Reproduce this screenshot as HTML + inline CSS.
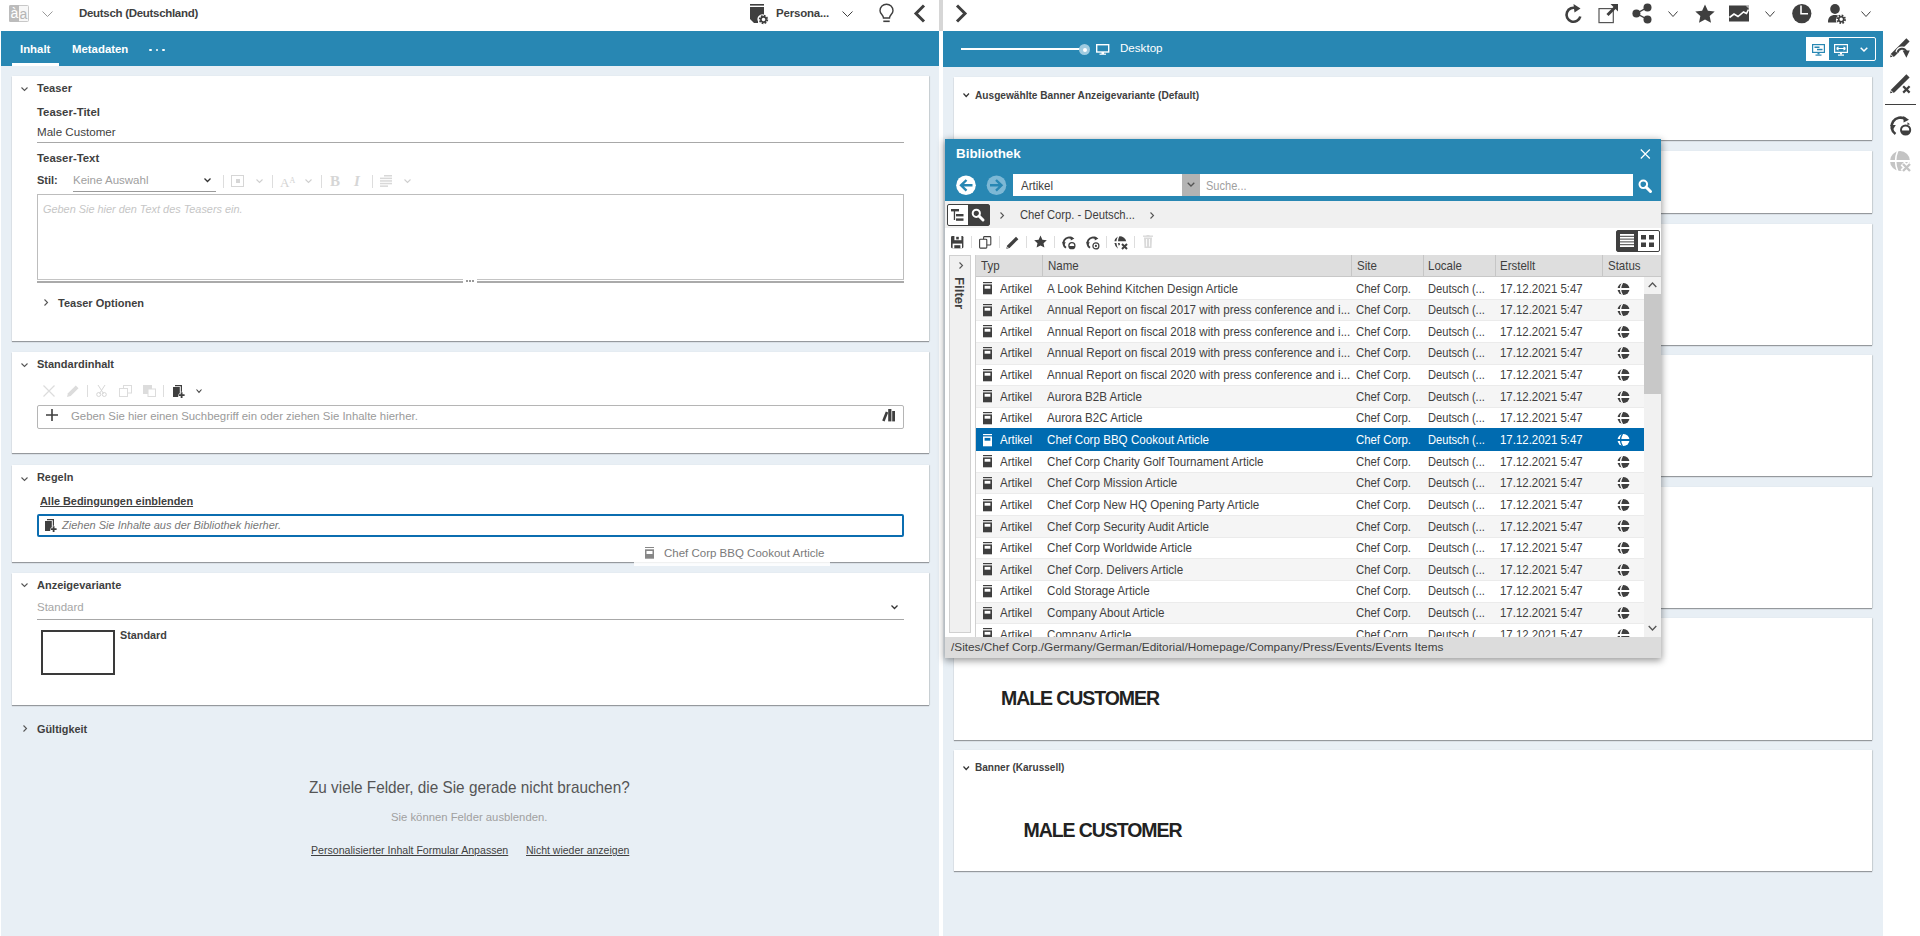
<!DOCTYPE html>
<html><head><meta charset="utf-8">
<style>
*{margin:0;padding:0;box-sizing:border-box}
html,body{width:1920px;height:936px;overflow:hidden;background:#fff;font-family:"Liberation Sans",sans-serif;color:#3f3f3f}
.a{position:absolute}
.t{position:absolute;white-space:nowrap;line-height:1}
.b{font-weight:bold}
svg{position:absolute;overflow:visible}
.card{position:absolute;background:#fff;box-shadow:0 1px 1px rgba(0,0,0,.35),1px 0 1px rgba(0,0,0,.08)}
.rcard{position:absolute;background:#fff;box-shadow:0 1px 1px rgba(0,0,0,.35),1px 0 1px rgba(0,0,0,.08);left:954px;width:918px}
.row{position:absolute;left:976px;width:668px;height:22px;font-size:11.6px;color:#3f3f3f}
.row .t{top:6px}
</style></head><body>

<!-- ============ LEFT PANEL ============ -->
<div class="a" style="left:0;top:0;width:939px;height:31px;background:#fff"></div>
<div class="a" style="left:939px;top:0;width:4px;height:31px;background:#d6d6d6"></div>
<div class="a" style="left:1px;top:31px;width:938px;height:35px;background:#2887b3"></div>
<div class="a" style="left:1px;top:66px;width:938px;height:870px;background:#e8eff5"></div>

<!-- top toolbar left -->
<div class="a" style="left:9px;top:5px;width:20px;height:17px;background:#f7f7f7;border:1px solid #c8c8c8;border-radius:1.5px"></div>
<div class="a" style="left:9px;top:5px;width:10px;height:17px;background:#bcbcbc;border-radius:1.5px 0 0 1.5px"></div>
<div class="t" style="left:10.5px;top:5.5px;font-size:14px;color:#fff">à</div>
<div class="t" style="left:19.5px;top:6.5px;font-size:14px;color:#b5b5b5">a</div>
<svg style="left:42px;top:11px" width="11" height="7"><path d="M0.5 0.5 L5.5 5.5 L10.5 0.5" fill="none" stroke="#9a9a9a" stroke-width="1"/></svg>
<div class="t b" style="left:79px;top:8.3px;font-size:11.5px;letter-spacing:-0.3px;color:#3f3f3f">Deutsch (Deutschland)</div>

<!-- personalization icon -->
<svg style="left:750px;top:4px" width="19" height="21" viewBox="0 0 19 21">
<rect x="0" y="0" width="14" height="1.6" fill="#3f3f3f"/>
<path d="M0 3 H14 V10.5 A5 5 0 0 0 8 17.5 V19 H4 L0 15 Z" fill="#3f3f3f"/>
<g transform="translate(13.5,15.5)"><circle r="3.6" fill="none" stroke="#3f3f3f" stroke-width="2.2" stroke-dasharray="1.6 1.2"/><circle r="2.6" fill="none" stroke="#3f3f3f" stroke-width="1.6"/></g>
</svg>
<div class="t b" style="left:776px;top:8px;font-size:11.5px;letter-spacing:-0.2px">Persona...</div>
<svg style="left:842px;top:11px" width="11" height="7"><path d="M0.5 0.5 L5.5 5.5 L10.5 0.5" fill="none" stroke="#3f3f3f" stroke-width="1"/></svg>
<!-- bulb -->
<svg style="left:879px;top:4px" width="15" height="19" viewBox="0 0 15 19">
<path d="M4.5 14 C4.5 11 1 10 1 6.7 A6.5 6.5 0 0 1 14 6.7 C14 10 10.5 11 10.5 14 Z" fill="none" stroke="#3f3f3f" stroke-width="1.4"/>
<rect x="4.3" y="16.5" width="6.4" height="1.6" fill="#3f3f3f"/>
</svg>
<svg style="left:913px;top:4px" width="13" height="19"><path d="M11 1.5 L3 9.5 L11 17.5" fill="none" stroke="#3f3f3f" stroke-width="3"/></svg>

<!-- tabs -->
<div class="t b" style="left:20px;top:44px;font-size:11.4px;color:#fff">Inhalt</div>
<div class="t b" style="left:72px;top:44px;font-size:11.4px;color:#fff">Metadaten</div>
<div class="a" style="left:149px;top:48.5px;width:2.6px;height:2.6px;border-radius:50%;background:#fff"></div>
<div class="a" style="left:155.5px;top:48.5px;width:2.6px;height:2.6px;border-radius:50%;background:#fff"></div>
<div class="a" style="left:162px;top:48.5px;width:2.6px;height:2.6px;border-radius:50%;background:#fff"></div>
<div class="a" style="left:12px;top:63px;width:47px;height:3px;background:#fff"></div>

<!-- card 1: Teaser -->
<div class="card" style="left:12px;top:76px;width:917px;height:265px"></div>
<svg style="left:21px;top:87px" width="7" height="5"><path d="M0.5 0.5 L3.5 3.5 L6.5 0.5" fill="none" stroke="#555" stroke-width="1.1"/></svg>
<div class="t b" style="left:37px;top:83px;font-size:11.1px">Teaser</div>
<div class="t b" style="left:37px;top:107px;font-size:11.4px">Teaser-Titel</div>
<div class="t" style="left:37px;top:126px;font-size:11.6px">Male Customer</div>
<div class="a" style="left:37px;top:142px;width:867px;height:1px;background:#a8a8a8"></div>
<div class="t b" style="left:37px;top:153px;font-size:11.4px">Teaser-Text</div>
<div class="t b" style="left:37px;top:175px;font-size:11px">Stil:</div>
<div class="t" style="left:73px;top:175px;font-size:11.5px;color:#a0a0a0">Keine Auswahl</div>
<svg style="left:204px;top:178px" width="7" height="5"><path d="M0.5 0.5 L3.5 3.5 L6.5 0.5" fill="none" stroke="#333" stroke-width="1.3"/></svg>
<div class="a" style="left:73px;top:191px;width:143px;height:1px;background:#9a9a9a"></div>
<!-- rte toolbar -->
<div class="a" style="left:223px;top:175px;width:1px;height:13px;background:#ddd"></div>
<div class="a" style="left:231px;top:175px;width:13px;height:12px;border:1px solid #d6d6d6"></div>
<div class="a" style="left:236px;top:179px;width:4px;height:4px;background:#d6d6d6"></div>
<svg style="left:256px;top:179px" width="7" height="5"><path d="M0.5 0.5 L3.5 3.5 L6.5 0.5" fill="none" stroke="#cfcfcf" stroke-width="1.1"/></svg>
<div class="a" style="left:272px;top:175px;width:1px;height:13px;background:#ddd"></div>
<div class="t" style="left:280px;top:176px;font-size:13px;color:#d3d3d3;font-family:'Liberation Serif',serif">A<span style="font-size:8px;vertical-align:4px">A</span></div>
<svg style="left:305px;top:179px" width="7" height="5"><path d="M0.5 0.5 L3.5 3.5 L6.5 0.5" fill="none" stroke="#cfcfcf" stroke-width="1.1"/></svg>
<div class="a" style="left:321px;top:175px;width:1px;height:13px;background:#ddd"></div>
<div class="t b" style="left:330px;top:174px;font-size:15px;color:#d6d6d6;font-family:'Liberation Serif',serif">B</div>
<div class="t b" style="left:354px;top:174px;font-size:15px;color:#d6d6d6;font-family:'Liberation Serif',serif;font-style:italic">I</div>
<div class="a" style="left:372px;top:175px;width:1px;height:13px;background:#ddd"></div>
<svg style="left:380px;top:175px" width="13" height="12"><g fill="#d8d8d8"><rect x="4" y="0" width="8" height="1.5"/><rect x="0" y="2.6" width="12" height="1.5"/><rect x="0" y="5.2" width="12" height="1.5"/><rect x="0" y="7.8" width="12" height="1.5"/><rect x="0" y="10.4" width="8" height="1.5"/></g></svg>
<svg style="left:404px;top:179px" width="7" height="5"><path d="M0.5 0.5 L3.5 3.5 L6.5 0.5" fill="none" stroke="#cfcfcf" stroke-width="1.1"/></svg>
<!-- editor box -->
<div class="a" style="left:37px;top:194px;width:867px;height:86px;border:1px solid #bdbdbd;border-bottom:none"></div>
<div class="a" style="left:37px;top:279px;width:867px;height:1px;background:#c4c4c4"></div>
<div class="a" style="left:37px;top:281px;width:867px;height:2px;background:#aaa"></div>
<div class="a" style="left:463px;top:278px;width:14px;height:5px;background:#fff"></div>
<div class="a" style="left:466px;top:280px;width:2px;height:2px;background:#999"></div>
<div class="a" style="left:469px;top:280px;width:2px;height:2px;background:#999"></div>
<div class="a" style="left:472px;top:280px;width:2px;height:2px;background:#999"></div>
<div class="t" style="left:43px;top:203.5px;font-size:10.9px;font-style:italic;color:#c6c6c6">Geben Sie hier den Text des Teasers ein.</div>
<svg style="left:44px;top:299px" width="5" height="7"><path d="M0.5 0.5 L3.5 3.5 L0.5 6.5" fill="none" stroke="#555" stroke-width="1.1"/></svg>
<div class="t b" style="left:58px;top:298px;font-size:11px">Teaser Optionen</div>

<!-- card 2: Standardinhalt -->
<div class="card" style="left:12px;top:352px;width:917px;height:101px"></div>
<svg style="left:21px;top:363px" width="7" height="5"><path d="M0.5 0.5 L3.5 3.5 L6.5 0.5" fill="none" stroke="#555" stroke-width="1.1"/></svg>
<div class="t b" style="left:37px;top:359px;font-size:11px">Standardinhalt</div>
<div class="a" style="left:37px;top:405px;width:867px;height:24px;border:1px solid #b5b5b5;border-radius:2px"></div>
<!-- std toolbar -->
<svg style="left:43px;top:385px" width="12" height="12"><path d="M0.5 0.5 L11.5 11.5 M11.5 0.5 L0.5 11.5" stroke="#dcdcdc" stroke-width="1.2"/></svg>
<svg style="left:67px;top:385px" width="12" height="12" viewBox="0 0 13 13"><path d="M0 13 L1 9 L9.5 0.5 L12.5 3.5 L4 12 Z" fill="#dcdcdc"/></svg>
<div class="a" style="left:87px;top:385px;width:1px;height:12px;background:#ddd"></div>
<svg style="left:96px;top:385px" width="11" height="12" viewBox="0 0 11 12"><path d="M2 0 L7.5 8.5 M9 0 L3.5 8.5" stroke="#d6d6d6" stroke-width="1"/><circle cx="2.7" cy="9.5" r="2" fill="none" stroke="#d6d6d6" stroke-width="1"/><circle cx="8.3" cy="9.5" r="2" fill="none" stroke="#d6d6d6" stroke-width="1"/></svg>
<svg style="left:119px;top:385px" width="13" height="12" viewBox="0 0 13 12"><rect x="4.5" y="0.5" width="8" height="7.5" fill="none" stroke="#dcdcdc" stroke-width="1"/><rect x="0.5" y="3.5" width="8" height="8" fill="#fff" stroke="#dcdcdc" stroke-width="1"/></svg>
<svg style="left:143px;top:385px" width="13" height="12" viewBox="0 0 13 12"><rect x="0" y="0" width="9" height="9" fill="#dcdcdc"/><rect x="5" y="4" width="7.5" height="7.5" fill="#fff" stroke="#dcdcdc" stroke-width="1"/></svg>
<div class="a" style="left:163px;top:385px;width:1px;height:12px;background:#ddd"></div>
<svg style="left:173px;top:385px" width="13" height="13" viewBox="0 0 13 13"><path d="M2 0.6 H8.4 V6.8" fill="none" stroke="#3f3f3f" stroke-width="1.2"/><path d="M0 2 H6.8 V8.2 A2.6 2.6 0 0 0 5.2 10.4 V12 H0 Z" fill="#3f3f3f"/><path d="M8.6 7.2 V13 M5.8 10.2 H11.6" stroke="#3f3f3f" stroke-width="1.8"/></svg>
<svg style="left:196px;top:389px" width="7" height="5"><path d="M0.5 0.5 L3 3.3 L5.5 0.5" fill="none" stroke="#444" stroke-width="1.1"/></svg>
<svg style="left:46px;top:409px" width="12" height="12"><path d="M6 0 V12 M0 6 H12" stroke="#3f3f3f" stroke-width="1.6"/></svg>
<svg style="left:882px;top:409px" width="14" height="13" viewBox="0 0 14 13"><path d="M0.2 11.6 L3.8 2.6 L6.2 3.4 L2.6 12.4 Z" fill="#3f3f3f"/><rect x="6.2" y="0" width="3.2" height="12.4" fill="#3f3f3f"/><rect x="10.2" y="2" width="2.8" height="10.4" fill="#3f3f3f"/></svg>
<div class="t" style="left:71px;top:411px;font-size:11.4px;color:#9a9a9a">Geben Sie hier einen Suchbegriff ein oder ziehen Sie Inhalte hierher.</div>

<!-- card 3: Regeln -->
<div class="card" style="left:12px;top:465px;width:917px;height:97px"></div>
<svg style="left:21px;top:477px" width="7" height="5"><path d="M0.5 0.5 L3.5 3.5 L6.5 0.5" fill="none" stroke="#555" stroke-width="1.1"/></svg>
<div class="t b" style="left:37px;top:472px;font-size:10.9px">Regeln</div>
<div class="t b" style="left:40px;top:496px;font-size:10.9px;text-decoration:underline">Alle Bedingungen einblenden</div>
<div class="a" style="left:37px;top:514px;width:867px;height:23px;border:2px solid #0b6db0;border-radius:2px"></div>
<div class="t" style="left:62px;top:520px;font-size:11px;font-style:italic;color:#777">Ziehen Sie Inhalte aus der Bibliothek hierher.</div>
<svg style="left:45px;top:519px" width="13" height="13" viewBox="0 0 13 13"><path d="M2 0.6 H8.4 V6.8" fill="none" stroke="#3f3f3f" stroke-width="1.2"/><path d="M0 2 H6.8 V8.2 A2.6 2.6 0 0 0 5.2 10.4 V12 H0 Z" fill="#3f3f3f"/><path d="M8.6 7.2 V13 M5.8 10.2 H11.6" stroke="#3f3f3f" stroke-width="1.8"/></svg>

<!-- card 4: Anzeigevariante -->
<div class="card" style="left:12px;top:573px;width:917px;height:132px"></div>
<svg style="left:21px;top:583px" width="7" height="5"><path d="M0.5 0.5 L3.5 3.5 L6.5 0.5" fill="none" stroke="#555" stroke-width="1.1"/></svg>
<div class="t b" style="left:37px;top:580px;font-size:11px">Anzeigevariante</div>
<div class="t" style="left:37px;top:602px;font-size:11.5px;color:#a6a6a6">Standard</div>
<svg style="left:891px;top:605px" width="7" height="5"><path d="M0.5 0.5 L3.5 3.5 L6.5 0.5" fill="none" stroke="#333" stroke-width="1.3"/></svg>
<div class="a" style="left:37px;top:619px;width:867px;height:1px;background:#a8a8a8"></div>
<div class="a" style="left:41px;top:630px;width:74px;height:45px;border:2px solid #3a3a3a"></div>
<div class="t b" style="left:120px;top:630px;font-size:10.8px">Standard</div>

<!-- Gueltigkeit -->
<svg style="left:23px;top:725px" width="5" height="7"><path d="M0.5 0.5 L3.5 3.5 L0.5 6.5" fill="none" stroke="#555" stroke-width="1.1"/></svg>
<div class="t b" style="left:37px;top:724px;font-size:10.9px">Gültigkeit</div>

<div class="t" style="left:309px;top:778.8px;font-size:17px;transform:scaleX(.9);transform-origin:0 0;color:#555">Zu viele Felder, die Sie gerade nicht brauchen?</div>
<div class="t" style="left:391px;top:812px;font-size:11.3px;color:#a0a0a0">Sie können Felder ausblenden.</div>
<div class="t" style="left:311px;top:845px;font-size:10.6px;color:#3f3f3f;text-decoration:underline">Personalisierter Inhalt Formular Anpassen</div>
<div class="t" style="left:526px;top:845px;font-size:10.5px;color:#3f3f3f;text-decoration:underline">Nicht wieder anzeigen</div>

<!-- ============ RIGHT PANEL ============ -->
<div class="a" style="left:943px;top:31px;width:940px;height:36px;background:#2887b3"></div>
<div class="a" style="left:943px;top:67px;width:940px;height:869px;background:#e8eff5"></div>
<svg style="left:955px;top:4px" width="13" height="19"><path d="M2 1.5 L10 9.5 L2 17.5" fill="none" stroke="#3f3f3f" stroke-width="3"/></svg>

<!-- right toolbar icons -->
<!-- reload -->
<svg style="left:1565px;top:4px" width="19" height="20" viewBox="0 0 19 20">
<path d="M15.3 12.5 A7 7 0 1 1 11.5 4.4" fill="none" stroke="#3f3f3f" stroke-width="2.6"/>
<path d="M8.5 0 L15.5 4.5 L9.5 8.5 Z" fill="#3f3f3f"/>
</svg>
<!-- external -->
<svg style="left:1598px;top:4px" width="21" height="20" viewBox="0 0 21 20">
<rect x="1" y="4.6" width="14.3" height="14" fill="none" stroke="#555" stroke-width="1.2"/>
<path d="M9.5 11 L17.5 3" stroke="#3f3f3f" stroke-width="3"/>
<path d="M12.5 0 H20 V7.5 Z" fill="#3f3f3f"/>
</svg>
<!-- share -->
<svg style="left:1632px;top:3px" width="21" height="21" viewBox="0 0 21 21">
<circle cx="15.5" cy="4.4" r="4" fill="#3f3f3f"/><circle cx="4.4" cy="10.5" r="4" fill="#3f3f3f"/><circle cx="15.5" cy="16.4" r="4" fill="#3f3f3f"/>
<path d="M15.5 4.4 L4.4 10.5 L15.5 16.4" fill="none" stroke="#3f3f3f" stroke-width="1.3"/>
</svg>
<svg style="left:1668px;top:11px" width="11" height="7"><path d="M0.5 0.5 L5 5.5 L9.5 0.5" fill="none" stroke="#3f3f3f" stroke-width="1"/></svg>
<!-- star -->
<svg style="left:1695px;top:4px" width="20" height="19" viewBox="0 0 20 19">
<path d="M10.00 0.40 L12.88 6.64 L19.70 7.45 L14.66 12.11 L16.00 18.85 L10.00 15.50 L4.00 18.85 L5.34 12.11 L0.30 7.45 L7.12 6.64 Z" fill="#3f3f3f"/>
</svg>
<!-- chart -->
<svg style="left:1729px;top:5px" width="21" height="17" viewBox="0 0 21 17">
<rect x="0" y="0.5" width="20" height="16" fill="#3f3f3f"/>
<path d="M0.5 12.5 L5 9 L9 11.5 L14.5 7 L17.5 8.5 L19.5 4.5" fill="none" stroke="#fff" stroke-width="1.6"/>
<path d="M16.5 0.5 L20 0.5 L20 4 Z" fill="#fff" opacity=".6"/>
</svg>
<svg style="left:1765px;top:11px" width="11" height="7"><path d="M0.5 0.5 L5 5.5 L9.5 0.5" fill="none" stroke="#3f3f3f" stroke-width="1"/></svg>
<!-- clock -->
<svg style="left:1792px;top:4px" width="20" height="20" viewBox="0 0 20 20">
<circle cx="9.8" cy="9.6" r="9.6" fill="#3f3f3f"/>
<path d="M9 1.5 V9.8 H16" fill="none" stroke="#fff" stroke-width="1.6"/>
</svg>
<!-- user gear -->
<svg style="left:1828px;top:4px" width="19" height="21" viewBox="0 0 19 21">
<ellipse cx="7" cy="5" rx="4.8" ry="5" fill="#3f3f3f"/>
<path d="M0 18.5 C0 13 2.5 11 7 11 C8.5 11 9.5 11.3 10.3 11.8 A5 5 0 0 0 8.5 18.5 Z" fill="#3f3f3f"/>
<g transform="translate(13.2,15.3)"><circle r="3.7" fill="none" stroke="#3f3f3f" stroke-width="2.2" stroke-dasharray="1.6 1.3"/><circle r="2.5" fill="none" stroke="#3f3f3f" stroke-width="1.6"/></g>
</svg>
<svg style="left:1861px;top:11px" width="11" height="7"><path d="M0.5 0.5 L5 5.5 L9.5 0.5" fill="none" stroke="#3f3f3f" stroke-width="1"/></svg>

<!-- desktop slider bar -->
<div class="a" style="left:961px;top:48px;width:122px;height:2px;background:#fff"></div>
<div class="a" style="left:1079px;top:44px;width:11px;height:11px;border-radius:50%;background:#9fcbe0"></div>
<div class="a" style="left:1082.5px;top:47.5px;width:4px;height:4px;border-radius:50%;background:#fff"></div>
<svg style="left:1096px;top:44px" width="14" height="11" viewBox="0 0 14 11">
<rect x="0.7" y="0.7" width="12" height="7.3" fill="none" stroke="#fff" stroke-width="1.4"/>
<rect x="5.5" y="8" width="2.5" height="2" fill="#fff"/><rect x="3.5" y="9.6" width="6.5" height="1.2" fill="#fff"/>
</svg>
<div class="t" style="left:1120px;top:42px;font-size:11.6px;color:#fff">Desktop</div>
<!-- segmented -->
<div class="a" style="left:1806px;top:37px;width:70px;height:24px;border:1px solid #fff;border-radius:2px"></div>
<div class="a" style="left:1806px;top:37px;width:23px;height:24px;background:#fff"></div>
<svg style="left:1812px;top:44px" width="13" height="12" viewBox="0 0 13 12">
<rect x="0.6" y="0.6" width="11.8" height="7.8" fill="none" stroke="#2887b3" stroke-width="1.2"/>
<rect x="2.5" y="2.5" width="5" height="1.5" fill="#2887b3"/><rect x="5" y="4.8" width="5.5" height="1.5" fill="#2887b3"/>
<rect x="5.5" y="9" width="2" height="1.5" fill="#2887b3"/><rect x="3.5" y="10.5" width="6" height="1.2" fill="#2887b3"/>
</svg>
<svg style="left:1834px;top:44px" width="14" height="12" viewBox="0 0 14 12">
<rect x="0.6" y="0.6" width="12.8" height="7.8" fill="none" stroke="#fff" stroke-width="1.2"/>
<path d="M2.5 4.5 H11.5 M2.5 4.5 L4.5 2.8 M2.5 4.5 L4.5 6.2 M11.5 4.5 L9.5 2.8 M11.5 4.5 L9.5 6.2" stroke="#fff" stroke-width="1.1" fill="none"/>
<rect x="6" y="9" width="2" height="1.5" fill="#fff"/><rect x="4" y="10.5" width="6" height="1.2" fill="#fff"/>
</svg>
<svg style="left:1860px;top:47px" width="8" height="5"><path d="M0.7 0.7 L4 4 L7.3 0.7" fill="none" stroke="#fff" stroke-width="1.5"/></svg>

<!-- preview cards -->
<div class="rcard" style="top:77px;height:63px"></div>
<svg style="left:963px;top:93px" width="7" height="5"><path d="M0.5 0.5 L3.2 3.5 L6 0.5" fill="none" stroke="#333" stroke-width="1.2"/></svg>
<div class="t b" style="left:975px;top:91px;font-size:10.15px">Ausgewählte Banner Anzeigevariante (Default)</div>
<div class="rcard" style="top:151px;height:62px"></div>
<div class="rcard" style="top:224px;height:121px"></div>
<div class="rcard" style="top:355px;height:121px"></div>
<div class="rcard" style="top:487px;height:121px"></div>
<div class="rcard" style="top:618px;height:122px"></div>
<div class="t b" style="left:1001px;top:688.5px;font-size:19.5px;letter-spacing:-1.07px;color:#222">MALE CUSTOMER</div>
<div class="rcard" style="top:750px;height:121px"></div>
<svg style="left:963px;top:766px" width="7" height="5"><path d="M0.5 0.5 L3.2 3.5 L6 0.5" fill="none" stroke="#333" stroke-width="1.2"/></svg>
<div class="t b" style="left:975px;top:763px;font-size:10.05px">Banner (Karussell)</div>
<div class="t b" style="left:1023.5px;top:820.5px;font-size:19.5px;letter-spacing:-1.07px;color:#222">MALE CUSTOMER</div>

<!-- right sidebar -->
<svg style="left:1890px;top:37px" width="21" height="22" viewBox="0 0 21 22">
<path d="M0 20.2 L1.2 16.4 L16.4 1.2 L19.6 4.4 L4.4 19.6 Z" fill="#3f3f3f"/>
<path d="M0.9 17.6 L3 19.7" stroke="#fff" stroke-width="1"/>
<path d="M7.6 15.5 A4.6 4.6 0 0 1 16.2 14.2" fill="none" stroke="#fff" stroke-width="4.4"/>
<path d="M7.6 15.5 A4.6 4.6 0 0 1 16.2 14.2" fill="none" stroke="#3f3f3f" stroke-width="2"/>
<path d="M12.6 13.6 L19.8 13.6 L16.4 20.8 Z" fill="#3f3f3f"/>
</svg>
<svg style="left:1890px;top:73px" width="21" height="22" viewBox="0 0 21 22">
<path d="M0 20.2 L1.2 16.4 L16.4 1.2 L19.6 4.4 L4.4 19.6 Z" fill="#3f3f3f"/>
<path d="M0.9 17.6 L3 19.7" stroke="#fff" stroke-width="1"/>
<path d="M13.2 13.2 L19.6 19.6 M19.6 13.2 L13.2 19.6" stroke="#fff" stroke-width="5"/>
<path d="M13.2 13.2 L19.6 19.6 M19.6 13.2 L13.2 19.6" stroke="#3f3f3f" stroke-width="2.2"/>
</svg>
<div class="a" style="left:1885px;top:104px;width:31px;height:1px;background:#3f3f3f"></div>
<svg style="left:1890px;top:115px" width="22" height="22" viewBox="0 0 22 22">
<path d="M5.5 19 A8.2 8.2 0 0 1 15.5 4.2" fill="none" stroke="#3f3f3f" stroke-width="2.6"/>
<path d="M13.4 1 L19 4.8 L13.6 7.6 Z" fill="#3f3f3f"/>
<path d="M0 10 L5.8 10 L3 14.6 Z" fill="#3f3f3f"/>
<circle cx="15.6" cy="15" r="6.2" fill="#fff"/>
<circle cx="15.6" cy="15" r="4.6" fill="none" stroke="#3f3f3f" stroke-width="2"/>
<path d="M11 15.4 A4.6 4.6 0 0 0 20.2 15.4 Z" fill="#3f3f3f"/>
<path d="M17.5 7.2 L20 9.2 L17.4 10 Z" fill="#3f3f3f"/>
</svg>
<svg style="left:1890px;top:151px" width="22" height="22" viewBox="0 0 22 22">
<circle cx="10" cy="10" r="10" fill="#c4c4c4"/>
<path d="M0 10 H20.5" stroke="#fff" stroke-width="2"/>
<path d="M7.6 0 Q3.6 10 7.6 20" fill="none" stroke="#fff" stroke-width="1.6"/>
<path d="M12.5 12.5 L20.5 20.5 M20.5 12.5 L12.5 20.5" stroke="#fff" stroke-width="5.4"/>
<path d="M13 13 L20 20 M20 13 L13 20" stroke="#c4c4c4" stroke-width="2.4"/>
</svg>

<!-- ============ LIBRARY DIALOG ============ -->
<div class="a" style="left:945px;top:139px;width:716px;height:519px;background:#fff;border-radius:2px;box-shadow:0 2px 7px 1px rgba(0,0,0,.38)"></div>
<div class="a" style="left:945px;top:139px;width:716px;height:62px;background:#2887b3"></div>
<div class="t b" style="left:956px;top:147px;font-size:13.4px;color:#fff">Bibliothek</div>
<svg style="left:1640px;top:149px" width="11" height="10"><path d="M0.8 0.5 L9.8 9.5 M9.8 0.5 L0.8 9.5" stroke="#fff" stroke-width="1.2"/></svg>
<!-- back / fwd -->
<svg style="left:956px;top:175px" width="21" height="21" viewBox="0 0 21 21">
<circle cx="10" cy="10.3" r="9.8" fill="#fff"/>
<path d="M16.5 10.3 H6 M10.5 5 L5 10.3 L10.5 15.6" fill="none" stroke="#2887b3" stroke-width="2.4"/>
</svg>
<svg style="left:986px;top:175px" width="21" height="21" viewBox="0 0 21 21">
<circle cx="10.5" cy="10.3" r="9.8" fill="#7db8d5"/>
<path d="M4 10.3 H14.5 M10 5 L15.5 10.3 L10 15.6" fill="none" stroke="#2887b3" stroke-width="2.4"/>
</svg>
<div class="a" style="left:1013px;top:174px;width:169px;height:22px;background:#fff"></div>
<div class="a" style="left:1182px;top:174px;width:18px;height:22px;background:#b3b3b3"></div>
<svg style="left:1187px;top:182px" width="8" height="5"><path d="M0.7 0.7 L4 4 L7.3 0.7" fill="none" stroke="#555" stroke-width="1.3"/></svg>
<div class="t" style="left:1020.5px;top:178.5px;font-size:13px;transform:scaleX(.889);transform-origin:0 0;color:#3f3f3f">Artikel</div>
<div class="a" style="left:1200px;top:174px;width:433px;height:22px;background:#fff"></div>
<div class="t" style="left:1206px;top:178.5px;font-size:13px;transform:scaleX(.85);transform-origin:0 0;color:#a0a0a0">Suche...</div>
<svg style="left:1638px;top:179px" width="14" height="14" viewBox="0 0 14 14">
<circle cx="5.3" cy="5.3" r="3.8" fill="none" stroke="#fff" stroke-width="2"/>
<path d="M8 8 L12.5 12.5" stroke="#fff" stroke-width="3" stroke-linecap="round"/>
</svg>
<!-- breadcrumb -->
<div class="a" style="left:945px;top:201px;width:716px;height:27px;background:#f0f0f0"></div>
<div class="a" style="left:947px;top:204px;width:43px;height:22px;border:1px solid #3f3f3f;border-radius:2px;background:#fff"></div>
<div class="a" style="left:968px;top:205px;width:21px;height:20px;background:#3f3f3f"></div>
<svg style="left:951px;top:209px" width="13" height="13" viewBox="0 0 13 13">
<rect x="0" y="0" width="8" height="2.4" fill="#3f3f3f"/>
<rect x="2.8" y="2" width="1.3" height="9" fill="#3f3f3f"/>
<rect x="5" y="5" width="7.5" height="2.4" fill="#3f3f3f"/>
<rect x="5" y="9.4" width="7.5" height="2.4" fill="#3f3f3f"/>
</svg>
<svg style="left:971px;top:208px" width="14" height="14" viewBox="0 0 14 14">
<circle cx="5.3" cy="5.3" r="3.6" fill="none" stroke="#fff" stroke-width="2"/>
<path d="M8 8 L12 12" stroke="#fff" stroke-width="3" stroke-linecap="round"/>
</svg>
<svg style="left:1000px;top:212px" width="5" height="7"><path d="M0.5 0.5 L3.5 3.5 L0.5 6.5" fill="none" stroke="#555" stroke-width="1.1"/></svg>
<div class="t" style="left:1020px;top:207.5px;font-size:13px;transform:scaleX(.865);transform-origin:0 0;color:#3f3f3f">Chef Corp. - Deutsch...</div>
<svg style="left:1150px;top:212px" width="5" height="7"><path d="M0.5 0.5 L3.5 3.5 L0.5 6.5" fill="none" stroke="#555" stroke-width="1.1"/></svg>
<!-- toolbar -->
<svg style="left:951px;top:236px" width="13" height="13" viewBox="0 0 13 13">
<rect x="0" y="0" width="12.4" height="12.2" rx="1.3" fill="#3f3f3f"/>
<rect x="3.4" y="0" width="7" height="4.2" fill="#fff"/><rect x="5.2" y="0.8" width="2.6" height="2.6" fill="#3f3f3f"/>
<rect x="1.6" y="7.6" width="9.4" height="4.6" fill="#fff"/><rect x="3.3" y="9.2" width="6.1" height="3" fill="#3f3f3f"/>
</svg>
<div class="a" style="left:971px;top:236px;width:1px;height:12px;background:#ddd"></div>
<svg style="left:979px;top:236px" width="13" height="13" viewBox="0 0 13 13">
<rect x="4.6" y="0.6" width="7.2" height="8.4" rx="0.8" fill="none" stroke="#3f3f3f" stroke-width="1.1"/>
<rect x="0.6" y="3.3" width="7.2" height="8.8" rx="0.8" fill="#fff" stroke="#3f3f3f" stroke-width="1.1"/>
</svg>
<div class="a" style="left:999px;top:236px;width:1px;height:12px;background:#ddd"></div>
<svg style="left:1006px;top:236px" width="13" height="13" viewBox="0 0 13 13">
<path d="M0.3 12.7 L1.2 9.6 L10 0.8 L12.4 3.2 L3.6 12 Z" fill="#3f3f3f"/><path d="M0.9 10.6 L2.6 12.3" stroke="#fff" stroke-width=".9"/>
</svg>
<div class="a" style="left:1026px;top:236px;width:1px;height:12px;background:#ddd"></div>
<svg style="left:1034px;top:235px" width="13" height="13" viewBox="0 0 20 19">
<path d="M10.00 0.40 L12.88 6.64 L19.70 7.45 L14.66 12.11 L16.00 18.85 L10.00 15.50 L4.00 18.85 L5.34 12.11 L0.30 7.45 L7.12 6.64 Z" fill="#3f3f3f"/>
</svg>
<div class="a" style="left:1054px;top:236px;width:1px;height:12px;background:#ddd"></div>
<svg style="left:1062px;top:236px" width="14" height="14" viewBox="0 0 14 14">
<path d="M4 11.8 A5.4 5.4 0 0 1 10.2 2.4" fill="none" stroke="#3f3f3f" stroke-width="1.9"/>
<path d="M8.6 0.2 L12.4 2.6 L8.8 4.6 Z" fill="#3f3f3f"/><path d="M0 6.2 L3.8 6.2 L2 9.4 Z" fill="#3f3f3f"/>
<circle cx="9.9" cy="9.7" r="4.1" fill="#fff"/>
<circle cx="9.9" cy="9.7" r="3" fill="none" stroke="#3f3f3f" stroke-width="1.3"/>
<path d="M6.9 9.9 A3 3 0 0 0 12.9 9.9 Z" fill="#3f3f3f"/>
</svg>
<svg style="left:1086px;top:236px" width="14" height="14" viewBox="0 0 14 14">
<path d="M4 11.8 A5.4 5.4 0 0 1 10.2 2.4" fill="none" stroke="#3f3f3f" stroke-width="1.9"/>
<path d="M8.6 0.2 L12.4 2.6 L8.8 4.6 Z" fill="#3f3f3f"/><path d="M0 6.2 L3.8 6.2 L2 9.4 Z" fill="#3f3f3f"/>
<circle cx="9.9" cy="9.7" r="4.1" fill="#fff"/>
<circle cx="9.9" cy="9.9" r="3" fill="none" stroke="#3f3f3f" stroke-width="1.2"/>
<circle cx="9.9" cy="9.9" r="1.1" fill="#3f3f3f"/>
</svg>
<div class="a" style="left:1106px;top:236px;width:1px;height:12px;background:#ddd"></div>
<svg style="left:1114px;top:236px" width="14" height="14" viewBox="0 0 14 14">
<path d="M5.2 0.4 A6.5 6.5 0 0 1 12.2 5.2 H4 Q4.4 2 5.2 0.4 Z" fill="#3f3f3f"/>
<path d="M3.8 0.6 Q1 2.4 0.4 5.2 H2.4 Q2.8 2.8 3.8 0.6 Z" fill="#3f3f3f"/>
<path d="M0.4 7 Q1 10.8 4 12.8 Q2.8 10.2 2.4 7 Z" fill="#3f3f3f"/>
<path d="M4 7 Q4.2 8.5 4.8 9.8 L6 8.6 L5.6 7 Z" fill="#3f3f3f"/>
<path d="M8 8 L13 13 M13 8 L8 13" stroke="#3f3f3f" stroke-width="2"/>
</svg>
<div class="a" style="left:1134px;top:236px;width:1px;height:12px;background:#ddd"></div>
<svg style="left:1143px;top:235px" width="10" height="13" viewBox="0 0 10 13">
<rect x="0" y="0.5" width="10" height="1.4" fill="#dadada"/><rect x="3.5" y="0" width="3" height="1" fill="#dadada"/>
<path d="M1 2.5 H9 L8.5 13 H1.5 Z" fill="#dadada"/>
<path d="M3.5 4 V11.5 M6.5 4 V11.5" stroke="#fff" stroke-width=".9"/>
</svg>
<!-- view toggle -->
<div class="a" style="left:1616px;top:230px;width:44px;height:22px;border:1px solid #3f3f3f;border-radius:2px;background:#fff"></div>
<div class="a" style="left:1617px;top:231px;width:21px;height:20px;background:#3f3f3f"></div>
<svg style="left:1620px;top:234px" width="14" height="13" viewBox="0 0 14 13"><g fill="#fff"><rect x="0" y="0" width="14" height="1.8"/><rect x="0" y="2.8" width="14" height="1.8"/><rect x="0" y="5.6" width="14" height="1.8"/><rect x="0" y="8.4" width="14" height="1.8"/><rect x="0" y="11.2" width="14" height="1.8"/></g></svg>
<svg style="left:1641px;top:235px" width="13" height="12" viewBox="0 0 13 12"><g fill="#3f3f3f"><rect x="0" y="0" width="5" height="4.5"/><rect x="8" y="0" width="5" height="4.5"/><rect x="0" y="7.5" width="5" height="4.5"/><rect x="8" y="7.5" width="5" height="4.5"/></g></svg>
<!-- filter panel -->
<div class="a" style="left:949px;top:255px;width:22px;height:378px;background:#f0f0f0;border:1px solid #d0d0d0"></div>
<svg style="left:959px;top:262px" width="5" height="7"><path d="M0.5 0.5 L3.5 3.5 L0.5 6.5" fill="none" stroke="#555" stroke-width="1.1"/></svg>
<div class="t b" style="left:953px;top:277px;font-size:13.2px;color:#3f3f3f;transform-origin:0 0;transform:translate(13.3px,0) rotate(90deg)">Filter</div>
<!-- grid header -->
<div class="a" style="left:976px;top:255px;width:685px;height:22px;background:#dedede;border-bottom:1px solid #c8c8c8"></div>
<div class="a" style="left:1042px;top:255px;width:1px;height:21px;background:#c6c6c6"></div>
<div class="a" style="left:1351px;top:255px;width:1px;height:21px;background:#c6c6c6"></div>
<div class="a" style="left:1423px;top:255px;width:1px;height:21px;background:#c6c6c6"></div>
<div class="a" style="left:1495px;top:255px;width:1px;height:21px;background:#c6c6c6"></div>
<div class="a" style="left:1602px;top:255px;width:1px;height:21px;background:#c6c6c6"></div>
<div class="t" style="left:981px;top:258.5px;font-size:13px;transform:scaleX(.885);transform-origin:0 0">Typ</div>
<div class="t" style="left:1048px;top:258.5px;font-size:13px;transform:scaleX(.885);transform-origin:0 0">Name</div>
<div class="t" style="left:1357px;top:258.5px;font-size:13px;transform:scaleX(.885);transform-origin:0 0">Site</div>
<div class="t" style="left:1428px;top:258.5px;font-size:13px;transform:scaleX(.885);transform-origin:0 0">Locale</div>
<div class="t" style="left:1500px;top:258.5px;font-size:13px;transform:scaleX(.885);transform-origin:0 0">Erstellt</div>
<div class="t" style="left:1608px;top:258.5px;font-size:13px;transform:scaleX(.885);transform-origin:0 0">Status</div>
<!-- rows -->
<div class="a" style="left:976px;top:277px;width:668px;height:360px;overflow:hidden" id="rows">
<div class="a" style="left:0;top:0.00px;width:668px;height:21.70px;background:#fff"></div>
<div class="a" style="left:0;top:21.70px;width:668px;height:1px;background:#ebebeb"></div>
<svg style="left:6.7px;top:5.20px" width="9" height="13" viewBox="0 0 9 13"><rect x="0" y="0" width="9" height="1.2" fill="#3f3f3f"/><rect x="0" y="2.4" width="9" height="9.9" fill="#3f3f3f"/><rect x="1.6" y="3.9" width="5.8" height="2.8" fill="#fff"/></svg>
<div class="t" style="left:24px;top:4.60px;font-size:13px;transform:scaleX(.889);transform-origin:0 0;color:#3f3f3f">Artikel</div>
<div class="t" style="left:71px;top:4.60px;font-size:13px;transform:scaleX(.893);transform-origin:0 0;color:#3f3f3f">A Look Behind Kitchen Design Article</div>
<div class="t" style="left:380px;top:4.60px;font-size:13px;transform:scaleX(.875);transform-origin:0 0;color:#3f3f3f">Chef Corp.</div>
<div class="t" style="left:452px;top:4.60px;font-size:13px;transform:scaleX(.856);transform-origin:0 0;color:#3f3f3f">Deutsch (...</div>
<div class="t" style="left:523.5px;top:4.60px;font-size:13px;transform:scaleX(.88);transform-origin:0 0;color:#3f3f3f">17.12.2021 5:47</div>
<svg style="left:641px;top:5.50px" width="13" height="12" viewBox="0 0 13 12"><circle cx="6.5" cy="6" r="6" fill="#3f3f3f"/><path d="M0 6 H13" stroke="#fff" stroke-width="2"/><path d="M5.4 -0.2 Q1.6 6 5.4 12.2" fill="none" stroke="#fff" stroke-width="1.3"/></svg>
<div class="a" style="left:0;top:22.70px;width:668px;height:20.63px;background:#f5f5f5"></div>
<div class="a" style="left:0;top:43.33px;width:668px;height:1px;background:#ebebeb"></div>
<svg style="left:6.7px;top:26.83px" width="9" height="13" viewBox="0 0 9 13"><rect x="0" y="0" width="9" height="1.2" fill="#3f3f3f"/><rect x="0" y="2.4" width="9" height="9.9" fill="#3f3f3f"/><rect x="1.6" y="3.9" width="5.8" height="2.8" fill="#fff"/></svg>
<div class="t" style="left:24px;top:26.23px;font-size:13px;transform:scaleX(.889);transform-origin:0 0;color:#3f3f3f">Artikel</div>
<div class="t" style="left:71px;top:26.23px;font-size:13px;transform:scaleX(.893);transform-origin:0 0;color:#3f3f3f">Annual Report on fiscal 2017 with press conference and i...</div>
<div class="t" style="left:380px;top:26.23px;font-size:13px;transform:scaleX(.875);transform-origin:0 0;color:#3f3f3f">Chef Corp.</div>
<div class="t" style="left:452px;top:26.23px;font-size:13px;transform:scaleX(.856);transform-origin:0 0;color:#3f3f3f">Deutsch (...</div>
<div class="t" style="left:523.5px;top:26.23px;font-size:13px;transform:scaleX(.88);transform-origin:0 0;color:#3f3f3f">17.12.2021 5:47</div>
<svg style="left:641px;top:27.13px" width="13" height="12" viewBox="0 0 13 12"><circle cx="6.5" cy="6" r="6" fill="#3f3f3f"/><path d="M0 6 H13" stroke="#fff" stroke-width="2"/><path d="M5.4 -0.2 Q1.6 6 5.4 12.2" fill="none" stroke="#fff" stroke-width="1.3"/></svg>
<div class="a" style="left:0;top:44.33px;width:668px;height:20.63px;background:#fff"></div>
<div class="a" style="left:0;top:64.96px;width:668px;height:1px;background:#ebebeb"></div>
<svg style="left:6.7px;top:48.46px" width="9" height="13" viewBox="0 0 9 13"><rect x="0" y="0" width="9" height="1.2" fill="#3f3f3f"/><rect x="0" y="2.4" width="9" height="9.9" fill="#3f3f3f"/><rect x="1.6" y="3.9" width="5.8" height="2.8" fill="#fff"/></svg>
<div class="t" style="left:24px;top:47.86px;font-size:13px;transform:scaleX(.889);transform-origin:0 0;color:#3f3f3f">Artikel</div>
<div class="t" style="left:71px;top:47.86px;font-size:13px;transform:scaleX(.893);transform-origin:0 0;color:#3f3f3f">Annual Report on fiscal 2018 with press conference and i...</div>
<div class="t" style="left:380px;top:47.86px;font-size:13px;transform:scaleX(.875);transform-origin:0 0;color:#3f3f3f">Chef Corp.</div>
<div class="t" style="left:452px;top:47.86px;font-size:13px;transform:scaleX(.856);transform-origin:0 0;color:#3f3f3f">Deutsch (...</div>
<div class="t" style="left:523.5px;top:47.86px;font-size:13px;transform:scaleX(.88);transform-origin:0 0;color:#3f3f3f">17.12.2021 5:47</div>
<svg style="left:641px;top:48.76px" width="13" height="12" viewBox="0 0 13 12"><circle cx="6.5" cy="6" r="6" fill="#3f3f3f"/><path d="M0 6 H13" stroke="#fff" stroke-width="2"/><path d="M5.4 -0.2 Q1.6 6 5.4 12.2" fill="none" stroke="#fff" stroke-width="1.3"/></svg>
<div class="a" style="left:0;top:65.96px;width:668px;height:20.63px;background:#f5f5f5"></div>
<div class="a" style="left:0;top:86.59px;width:668px;height:1px;background:#ebebeb"></div>
<svg style="left:6.7px;top:70.09px" width="9" height="13" viewBox="0 0 9 13"><rect x="0" y="0" width="9" height="1.2" fill="#3f3f3f"/><rect x="0" y="2.4" width="9" height="9.9" fill="#3f3f3f"/><rect x="1.6" y="3.9" width="5.8" height="2.8" fill="#fff"/></svg>
<div class="t" style="left:24px;top:69.49px;font-size:13px;transform:scaleX(.889);transform-origin:0 0;color:#3f3f3f">Artikel</div>
<div class="t" style="left:71px;top:69.49px;font-size:13px;transform:scaleX(.893);transform-origin:0 0;color:#3f3f3f">Annual Report on fiscal 2019 with press conference and i...</div>
<div class="t" style="left:380px;top:69.49px;font-size:13px;transform:scaleX(.875);transform-origin:0 0;color:#3f3f3f">Chef Corp.</div>
<div class="t" style="left:452px;top:69.49px;font-size:13px;transform:scaleX(.856);transform-origin:0 0;color:#3f3f3f">Deutsch (...</div>
<div class="t" style="left:523.5px;top:69.49px;font-size:13px;transform:scaleX(.88);transform-origin:0 0;color:#3f3f3f">17.12.2021 5:47</div>
<svg style="left:641px;top:70.39px" width="13" height="12" viewBox="0 0 13 12"><circle cx="6.5" cy="6" r="6" fill="#3f3f3f"/><path d="M0 6 H13" stroke="#fff" stroke-width="2"/><path d="M5.4 -0.2 Q1.6 6 5.4 12.2" fill="none" stroke="#fff" stroke-width="1.3"/></svg>
<div class="a" style="left:0;top:87.59px;width:668px;height:20.63px;background:#fff"></div>
<div class="a" style="left:0;top:108.22px;width:668px;height:1px;background:#ebebeb"></div>
<svg style="left:6.7px;top:91.72px" width="9" height="13" viewBox="0 0 9 13"><rect x="0" y="0" width="9" height="1.2" fill="#3f3f3f"/><rect x="0" y="2.4" width="9" height="9.9" fill="#3f3f3f"/><rect x="1.6" y="3.9" width="5.8" height="2.8" fill="#fff"/></svg>
<div class="t" style="left:24px;top:91.12px;font-size:13px;transform:scaleX(.889);transform-origin:0 0;color:#3f3f3f">Artikel</div>
<div class="t" style="left:71px;top:91.12px;font-size:13px;transform:scaleX(.893);transform-origin:0 0;color:#3f3f3f">Annual Report on fiscal 2020 with press conference and i...</div>
<div class="t" style="left:380px;top:91.12px;font-size:13px;transform:scaleX(.875);transform-origin:0 0;color:#3f3f3f">Chef Corp.</div>
<div class="t" style="left:452px;top:91.12px;font-size:13px;transform:scaleX(.856);transform-origin:0 0;color:#3f3f3f">Deutsch (...</div>
<div class="t" style="left:523.5px;top:91.12px;font-size:13px;transform:scaleX(.88);transform-origin:0 0;color:#3f3f3f">17.12.2021 5:47</div>
<svg style="left:641px;top:92.02px" width="13" height="12" viewBox="0 0 13 12"><circle cx="6.5" cy="6" r="6" fill="#3f3f3f"/><path d="M0 6 H13" stroke="#fff" stroke-width="2"/><path d="M5.4 -0.2 Q1.6 6 5.4 12.2" fill="none" stroke="#fff" stroke-width="1.3"/></svg>
<div class="a" style="left:0;top:109.22px;width:668px;height:20.63px;background:#f5f5f5"></div>
<div class="a" style="left:0;top:129.85px;width:668px;height:1px;background:#ebebeb"></div>
<svg style="left:6.7px;top:113.35px" width="9" height="13" viewBox="0 0 9 13"><rect x="0" y="0" width="9" height="1.2" fill="#3f3f3f"/><rect x="0" y="2.4" width="9" height="9.9" fill="#3f3f3f"/><rect x="1.6" y="3.9" width="5.8" height="2.8" fill="#fff"/></svg>
<div class="t" style="left:24px;top:112.75px;font-size:13px;transform:scaleX(.889);transform-origin:0 0;color:#3f3f3f">Artikel</div>
<div class="t" style="left:71px;top:112.75px;font-size:13px;transform:scaleX(.893);transform-origin:0 0;color:#3f3f3f">Aurora B2B Article</div>
<div class="t" style="left:380px;top:112.75px;font-size:13px;transform:scaleX(.875);transform-origin:0 0;color:#3f3f3f">Chef Corp.</div>
<div class="t" style="left:452px;top:112.75px;font-size:13px;transform:scaleX(.856);transform-origin:0 0;color:#3f3f3f">Deutsch (...</div>
<div class="t" style="left:523.5px;top:112.75px;font-size:13px;transform:scaleX(.88);transform-origin:0 0;color:#3f3f3f">17.12.2021 5:47</div>
<svg style="left:641px;top:113.65px" width="13" height="12" viewBox="0 0 13 12"><circle cx="6.5" cy="6" r="6" fill="#3f3f3f"/><path d="M0 6 H13" stroke="#fff" stroke-width="2"/><path d="M5.4 -0.2 Q1.6 6 5.4 12.2" fill="none" stroke="#fff" stroke-width="1.3"/></svg>
<div class="a" style="left:0;top:130.85px;width:668px;height:20.63px;background:#fff"></div>
<div class="a" style="left:0;top:151.48px;width:668px;height:1px;background:#ebebeb"></div>
<svg style="left:6.7px;top:134.98px" width="9" height="13" viewBox="0 0 9 13"><rect x="0" y="0" width="9" height="1.2" fill="#3f3f3f"/><rect x="0" y="2.4" width="9" height="9.9" fill="#3f3f3f"/><rect x="1.6" y="3.9" width="5.8" height="2.8" fill="#fff"/></svg>
<div class="t" style="left:24px;top:134.38px;font-size:13px;transform:scaleX(.889);transform-origin:0 0;color:#3f3f3f">Artikel</div>
<div class="t" style="left:71px;top:134.38px;font-size:13px;transform:scaleX(.893);transform-origin:0 0;color:#3f3f3f">Aurora B2C Article</div>
<div class="t" style="left:380px;top:134.38px;font-size:13px;transform:scaleX(.875);transform-origin:0 0;color:#3f3f3f">Chef Corp.</div>
<div class="t" style="left:452px;top:134.38px;font-size:13px;transform:scaleX(.856);transform-origin:0 0;color:#3f3f3f">Deutsch (...</div>
<div class="t" style="left:523.5px;top:134.38px;font-size:13px;transform:scaleX(.88);transform-origin:0 0;color:#3f3f3f">17.12.2021 5:47</div>
<svg style="left:641px;top:135.28px" width="13" height="12" viewBox="0 0 13 12"><circle cx="6.5" cy="6" r="6" fill="#3f3f3f"/><path d="M0 6 H13" stroke="#fff" stroke-width="2"/><path d="M5.4 -0.2 Q1.6 6 5.4 12.2" fill="none" stroke="#fff" stroke-width="1.3"/></svg>
<div class="a" style="left:0;top:151.48px;width:668px;height:22.63px;background:#006bb0"></div>
<svg style="left:6.7px;top:156.61px" width="9" height="13" viewBox="0 0 9 13"><rect x="0" y="0" width="9" height="1.2" fill="#fff"/><rect x="0" y="2.4" width="9" height="9.9" fill="#fff"/><rect x="1.6" y="3.9" width="5.8" height="2.8" fill="#006bb0"/></svg>
<div class="t" style="left:24px;top:156.01px;font-size:13px;transform:scaleX(.889);transform-origin:0 0;color:#fff">Artikel</div>
<div class="t" style="left:71px;top:156.01px;font-size:13px;transform:scaleX(.893);transform-origin:0 0;color:#fff">Chef Corp BBQ Cookout Article</div>
<div class="t" style="left:380px;top:156.01px;font-size:13px;transform:scaleX(.875);transform-origin:0 0;color:#fff">Chef Corp.</div>
<div class="t" style="left:452px;top:156.01px;font-size:13px;transform:scaleX(.856);transform-origin:0 0;color:#fff">Deutsch (...</div>
<div class="t" style="left:523.5px;top:156.01px;font-size:13px;transform:scaleX(.88);transform-origin:0 0;color:#fff">17.12.2021 5:47</div>
<svg style="left:641px;top:156.91px" width="13" height="12" viewBox="0 0 13 12"><circle cx="6.5" cy="6" r="6" fill="#fff"/><path d="M0 6 H13" stroke="#006bb0" stroke-width="2"/><path d="M5.4 -0.2 Q1.6 6 5.4 12.2" fill="none" stroke="#006bb0" stroke-width="1.3"/></svg>
<div class="a" style="left:0;top:174.11px;width:668px;height:20.63px;background:#fff"></div>
<div class="a" style="left:0;top:194.74px;width:668px;height:1px;background:#ebebeb"></div>
<svg style="left:6.7px;top:178.24px" width="9" height="13" viewBox="0 0 9 13"><rect x="0" y="0" width="9" height="1.2" fill="#3f3f3f"/><rect x="0" y="2.4" width="9" height="9.9" fill="#3f3f3f"/><rect x="1.6" y="3.9" width="5.8" height="2.8" fill="#fff"/></svg>
<div class="t" style="left:24px;top:177.64px;font-size:13px;transform:scaleX(.889);transform-origin:0 0;color:#3f3f3f">Artikel</div>
<div class="t" style="left:71px;top:177.64px;font-size:13px;transform:scaleX(.893);transform-origin:0 0;color:#3f3f3f">Chef Corp Charity Golf Tournament Article</div>
<div class="t" style="left:380px;top:177.64px;font-size:13px;transform:scaleX(.875);transform-origin:0 0;color:#3f3f3f">Chef Corp.</div>
<div class="t" style="left:452px;top:177.64px;font-size:13px;transform:scaleX(.856);transform-origin:0 0;color:#3f3f3f">Deutsch (...</div>
<div class="t" style="left:523.5px;top:177.64px;font-size:13px;transform:scaleX(.88);transform-origin:0 0;color:#3f3f3f">17.12.2021 5:47</div>
<svg style="left:641px;top:178.54px" width="13" height="12" viewBox="0 0 13 12"><circle cx="6.5" cy="6" r="6" fill="#3f3f3f"/><path d="M0 6 H13" stroke="#fff" stroke-width="2"/><path d="M5.4 -0.2 Q1.6 6 5.4 12.2" fill="none" stroke="#fff" stroke-width="1.3"/></svg>
<div class="a" style="left:0;top:195.74px;width:668px;height:20.63px;background:#f5f5f5"></div>
<div class="a" style="left:0;top:216.37px;width:668px;height:1px;background:#ebebeb"></div>
<svg style="left:6.7px;top:199.87px" width="9" height="13" viewBox="0 0 9 13"><rect x="0" y="0" width="9" height="1.2" fill="#3f3f3f"/><rect x="0" y="2.4" width="9" height="9.9" fill="#3f3f3f"/><rect x="1.6" y="3.9" width="5.8" height="2.8" fill="#fff"/></svg>
<div class="t" style="left:24px;top:199.27px;font-size:13px;transform:scaleX(.889);transform-origin:0 0;color:#3f3f3f">Artikel</div>
<div class="t" style="left:71px;top:199.27px;font-size:13px;transform:scaleX(.893);transform-origin:0 0;color:#3f3f3f">Chef Corp Mission Article</div>
<div class="t" style="left:380px;top:199.27px;font-size:13px;transform:scaleX(.875);transform-origin:0 0;color:#3f3f3f">Chef Corp.</div>
<div class="t" style="left:452px;top:199.27px;font-size:13px;transform:scaleX(.856);transform-origin:0 0;color:#3f3f3f">Deutsch (...</div>
<div class="t" style="left:523.5px;top:199.27px;font-size:13px;transform:scaleX(.88);transform-origin:0 0;color:#3f3f3f">17.12.2021 5:47</div>
<svg style="left:641px;top:200.17px" width="13" height="12" viewBox="0 0 13 12"><circle cx="6.5" cy="6" r="6" fill="#3f3f3f"/><path d="M0 6 H13" stroke="#fff" stroke-width="2"/><path d="M5.4 -0.2 Q1.6 6 5.4 12.2" fill="none" stroke="#fff" stroke-width="1.3"/></svg>
<div class="a" style="left:0;top:217.37px;width:668px;height:20.63px;background:#fff"></div>
<div class="a" style="left:0;top:238.00px;width:668px;height:1px;background:#ebebeb"></div>
<svg style="left:6.7px;top:221.50px" width="9" height="13" viewBox="0 0 9 13"><rect x="0" y="0" width="9" height="1.2" fill="#3f3f3f"/><rect x="0" y="2.4" width="9" height="9.9" fill="#3f3f3f"/><rect x="1.6" y="3.9" width="5.8" height="2.8" fill="#fff"/></svg>
<div class="t" style="left:24px;top:220.90px;font-size:13px;transform:scaleX(.889);transform-origin:0 0;color:#3f3f3f">Artikel</div>
<div class="t" style="left:71px;top:220.90px;font-size:13px;transform:scaleX(.893);transform-origin:0 0;color:#3f3f3f">Chef Corp New HQ Opening Party Article</div>
<div class="t" style="left:380px;top:220.90px;font-size:13px;transform:scaleX(.875);transform-origin:0 0;color:#3f3f3f">Chef Corp.</div>
<div class="t" style="left:452px;top:220.90px;font-size:13px;transform:scaleX(.856);transform-origin:0 0;color:#3f3f3f">Deutsch (...</div>
<div class="t" style="left:523.5px;top:220.90px;font-size:13px;transform:scaleX(.88);transform-origin:0 0;color:#3f3f3f">17.12.2021 5:47</div>
<svg style="left:641px;top:221.80px" width="13" height="12" viewBox="0 0 13 12"><circle cx="6.5" cy="6" r="6" fill="#3f3f3f"/><path d="M0 6 H13" stroke="#fff" stroke-width="2"/><path d="M5.4 -0.2 Q1.6 6 5.4 12.2" fill="none" stroke="#fff" stroke-width="1.3"/></svg>
<div class="a" style="left:0;top:239.00px;width:668px;height:20.63px;background:#f5f5f5"></div>
<div class="a" style="left:0;top:259.63px;width:668px;height:1px;background:#ebebeb"></div>
<svg style="left:6.7px;top:243.13px" width="9" height="13" viewBox="0 0 9 13"><rect x="0" y="0" width="9" height="1.2" fill="#3f3f3f"/><rect x="0" y="2.4" width="9" height="9.9" fill="#3f3f3f"/><rect x="1.6" y="3.9" width="5.8" height="2.8" fill="#fff"/></svg>
<div class="t" style="left:24px;top:242.53px;font-size:13px;transform:scaleX(.889);transform-origin:0 0;color:#3f3f3f">Artikel</div>
<div class="t" style="left:71px;top:242.53px;font-size:13px;transform:scaleX(.893);transform-origin:0 0;color:#3f3f3f">Chef Corp Security Audit Article</div>
<div class="t" style="left:380px;top:242.53px;font-size:13px;transform:scaleX(.875);transform-origin:0 0;color:#3f3f3f">Chef Corp.</div>
<div class="t" style="left:452px;top:242.53px;font-size:13px;transform:scaleX(.856);transform-origin:0 0;color:#3f3f3f">Deutsch (...</div>
<div class="t" style="left:523.5px;top:242.53px;font-size:13px;transform:scaleX(.88);transform-origin:0 0;color:#3f3f3f">17.12.2021 5:47</div>
<svg style="left:641px;top:243.43px" width="13" height="12" viewBox="0 0 13 12"><circle cx="6.5" cy="6" r="6" fill="#3f3f3f"/><path d="M0 6 H13" stroke="#fff" stroke-width="2"/><path d="M5.4 -0.2 Q1.6 6 5.4 12.2" fill="none" stroke="#fff" stroke-width="1.3"/></svg>
<div class="a" style="left:0;top:260.63px;width:668px;height:20.63px;background:#fff"></div>
<div class="a" style="left:0;top:281.26px;width:668px;height:1px;background:#ebebeb"></div>
<svg style="left:6.7px;top:264.76px" width="9" height="13" viewBox="0 0 9 13"><rect x="0" y="0" width="9" height="1.2" fill="#3f3f3f"/><rect x="0" y="2.4" width="9" height="9.9" fill="#3f3f3f"/><rect x="1.6" y="3.9" width="5.8" height="2.8" fill="#fff"/></svg>
<div class="t" style="left:24px;top:264.16px;font-size:13px;transform:scaleX(.889);transform-origin:0 0;color:#3f3f3f">Artikel</div>
<div class="t" style="left:71px;top:264.16px;font-size:13px;transform:scaleX(.893);transform-origin:0 0;color:#3f3f3f">Chef Corp Worldwide Article</div>
<div class="t" style="left:380px;top:264.16px;font-size:13px;transform:scaleX(.875);transform-origin:0 0;color:#3f3f3f">Chef Corp.</div>
<div class="t" style="left:452px;top:264.16px;font-size:13px;transform:scaleX(.856);transform-origin:0 0;color:#3f3f3f">Deutsch (...</div>
<div class="t" style="left:523.5px;top:264.16px;font-size:13px;transform:scaleX(.88);transform-origin:0 0;color:#3f3f3f">17.12.2021 5:47</div>
<svg style="left:641px;top:265.06px" width="13" height="12" viewBox="0 0 13 12"><circle cx="6.5" cy="6" r="6" fill="#3f3f3f"/><path d="M0 6 H13" stroke="#fff" stroke-width="2"/><path d="M5.4 -0.2 Q1.6 6 5.4 12.2" fill="none" stroke="#fff" stroke-width="1.3"/></svg>
<div class="a" style="left:0;top:282.26px;width:668px;height:20.63px;background:#f5f5f5"></div>
<div class="a" style="left:0;top:302.89px;width:668px;height:1px;background:#ebebeb"></div>
<svg style="left:6.7px;top:286.39px" width="9" height="13" viewBox="0 0 9 13"><rect x="0" y="0" width="9" height="1.2" fill="#3f3f3f"/><rect x="0" y="2.4" width="9" height="9.9" fill="#3f3f3f"/><rect x="1.6" y="3.9" width="5.8" height="2.8" fill="#fff"/></svg>
<div class="t" style="left:24px;top:285.79px;font-size:13px;transform:scaleX(.889);transform-origin:0 0;color:#3f3f3f">Artikel</div>
<div class="t" style="left:71px;top:285.79px;font-size:13px;transform:scaleX(.893);transform-origin:0 0;color:#3f3f3f">Chef Corp. Delivers Article</div>
<div class="t" style="left:380px;top:285.79px;font-size:13px;transform:scaleX(.875);transform-origin:0 0;color:#3f3f3f">Chef Corp.</div>
<div class="t" style="left:452px;top:285.79px;font-size:13px;transform:scaleX(.856);transform-origin:0 0;color:#3f3f3f">Deutsch (...</div>
<div class="t" style="left:523.5px;top:285.79px;font-size:13px;transform:scaleX(.88);transform-origin:0 0;color:#3f3f3f">17.12.2021 5:47</div>
<svg style="left:641px;top:286.69px" width="13" height="12" viewBox="0 0 13 12"><circle cx="6.5" cy="6" r="6" fill="#3f3f3f"/><path d="M0 6 H13" stroke="#fff" stroke-width="2"/><path d="M5.4 -0.2 Q1.6 6 5.4 12.2" fill="none" stroke="#fff" stroke-width="1.3"/></svg>
<div class="a" style="left:0;top:303.89px;width:668px;height:20.63px;background:#fff"></div>
<div class="a" style="left:0;top:324.52px;width:668px;height:1px;background:#ebebeb"></div>
<svg style="left:6.7px;top:308.02px" width="9" height="13" viewBox="0 0 9 13"><rect x="0" y="0" width="9" height="1.2" fill="#3f3f3f"/><rect x="0" y="2.4" width="9" height="9.9" fill="#3f3f3f"/><rect x="1.6" y="3.9" width="5.8" height="2.8" fill="#fff"/></svg>
<div class="t" style="left:24px;top:307.42px;font-size:13px;transform:scaleX(.889);transform-origin:0 0;color:#3f3f3f">Artikel</div>
<div class="t" style="left:71px;top:307.42px;font-size:13px;transform:scaleX(.893);transform-origin:0 0;color:#3f3f3f">Cold Storage Article</div>
<div class="t" style="left:380px;top:307.42px;font-size:13px;transform:scaleX(.875);transform-origin:0 0;color:#3f3f3f">Chef Corp.</div>
<div class="t" style="left:452px;top:307.42px;font-size:13px;transform:scaleX(.856);transform-origin:0 0;color:#3f3f3f">Deutsch (...</div>
<div class="t" style="left:523.5px;top:307.42px;font-size:13px;transform:scaleX(.88);transform-origin:0 0;color:#3f3f3f">17.12.2021 5:47</div>
<svg style="left:641px;top:308.32px" width="13" height="12" viewBox="0 0 13 12"><circle cx="6.5" cy="6" r="6" fill="#3f3f3f"/><path d="M0 6 H13" stroke="#fff" stroke-width="2"/><path d="M5.4 -0.2 Q1.6 6 5.4 12.2" fill="none" stroke="#fff" stroke-width="1.3"/></svg>
<div class="a" style="left:0;top:325.52px;width:668px;height:20.63px;background:#f5f5f5"></div>
<div class="a" style="left:0;top:346.15px;width:668px;height:1px;background:#ebebeb"></div>
<svg style="left:6.7px;top:329.65px" width="9" height="13" viewBox="0 0 9 13"><rect x="0" y="0" width="9" height="1.2" fill="#3f3f3f"/><rect x="0" y="2.4" width="9" height="9.9" fill="#3f3f3f"/><rect x="1.6" y="3.9" width="5.8" height="2.8" fill="#fff"/></svg>
<div class="t" style="left:24px;top:329.05px;font-size:13px;transform:scaleX(.889);transform-origin:0 0;color:#3f3f3f">Artikel</div>
<div class="t" style="left:71px;top:329.05px;font-size:13px;transform:scaleX(.893);transform-origin:0 0;color:#3f3f3f">Company About Article</div>
<div class="t" style="left:380px;top:329.05px;font-size:13px;transform:scaleX(.875);transform-origin:0 0;color:#3f3f3f">Chef Corp.</div>
<div class="t" style="left:452px;top:329.05px;font-size:13px;transform:scaleX(.856);transform-origin:0 0;color:#3f3f3f">Deutsch (...</div>
<div class="t" style="left:523.5px;top:329.05px;font-size:13px;transform:scaleX(.88);transform-origin:0 0;color:#3f3f3f">17.12.2021 5:47</div>
<svg style="left:641px;top:329.95px" width="13" height="12" viewBox="0 0 13 12"><circle cx="6.5" cy="6" r="6" fill="#3f3f3f"/><path d="M0 6 H13" stroke="#fff" stroke-width="2"/><path d="M5.4 -0.2 Q1.6 6 5.4 12.2" fill="none" stroke="#fff" stroke-width="1.3"/></svg>
<div class="a" style="left:0;top:347.15px;width:668px;height:20.63px;background:#fff"></div>
<div class="a" style="left:0;top:367.78px;width:668px;height:1px;background:#ebebeb"></div>
<svg style="left:6.7px;top:351.28px" width="9" height="13" viewBox="0 0 9 13"><rect x="0" y="0" width="9" height="1.2" fill="#3f3f3f"/><rect x="0" y="2.4" width="9" height="9.9" fill="#3f3f3f"/><rect x="1.6" y="3.9" width="5.8" height="2.8" fill="#fff"/></svg>
<div class="t" style="left:24px;top:350.68px;font-size:13px;transform:scaleX(.889);transform-origin:0 0;color:#3f3f3f">Artikel</div>
<div class="t" style="left:71px;top:350.68px;font-size:13px;transform:scaleX(.893);transform-origin:0 0;color:#3f3f3f">Company Article</div>
<div class="t" style="left:380px;top:350.68px;font-size:13px;transform:scaleX(.875);transform-origin:0 0;color:#3f3f3f">Chef Corp.</div>
<div class="t" style="left:452px;top:350.68px;font-size:13px;transform:scaleX(.856);transform-origin:0 0;color:#3f3f3f">Deutsch (...</div>
<div class="t" style="left:523.5px;top:350.68px;font-size:13px;transform:scaleX(.88);transform-origin:0 0;color:#3f3f3f">17.12.2021 5:47</div>
<svg style="left:641px;top:351.58px" width="13" height="12" viewBox="0 0 13 12"><circle cx="6.5" cy="6" r="6" fill="#3f3f3f"/><path d="M0 6 H13" stroke="#fff" stroke-width="2"/><path d="M5.4 -0.2 Q1.6 6 5.4 12.2" fill="none" stroke="#fff" stroke-width="1.3"/></svg>
</div>
<!-- scrollbar -->
<div class="a" style="left:1644px;top:277px;width:17px;height:360px;background:#f1f1f1"></div>
<div class="a" style="left:1644px;top:294px;width:17px;height:100px;background:#c8c8c8"></div>
<svg style="left:1648px;top:282px" width="9" height="6"><path d="M0.7 5 L4.5 1 L8.3 5" fill="none" stroke="#555" stroke-width="1.3"/></svg>
<svg style="left:1648px;top:625px" width="9" height="6"><path d="M0.7 1 L4.5 5 L8.3 1" fill="none" stroke="#555" stroke-width="1.3"/></svg>
<div class="a" style="left:975px;top:255px;width:1px;height:382px;background:#d0d0d0"></div>
<!-- status bar -->
<div class="a" style="left:945px;top:637px;width:716px;height:21px;background:#dcdcdc"></div>
<div class="t" style="left:951px;top:642px;font-size:11.8px;color:#3f3f3f">/Sites/Chef Corp./Germany/German/Editorial/Homepage/Company/Press/Events/Events Items</div>

<!-- drag proxy -->
<div class="a" style="left:634px;top:541px;width:196px;height:25px;background:rgba(255,255,255,.86)"></div>
<svg style="left:644.5px;top:547px" width="10" height="12" viewBox="0 0 10 12"><rect x="0" y="0" width="9" height="1" fill="#878787"/><rect x="0" y="2.3" width="9" height="9.4" fill="#878787"/><rect x="1.5" y="4" width="6" height="3" fill="#fff"/></svg>
<div class="t" style="left:664px;top:547.5px;font-size:11.5px;color:#7a7a7a">Chef Corp BBQ Cookout Article</div>

</body></html>
